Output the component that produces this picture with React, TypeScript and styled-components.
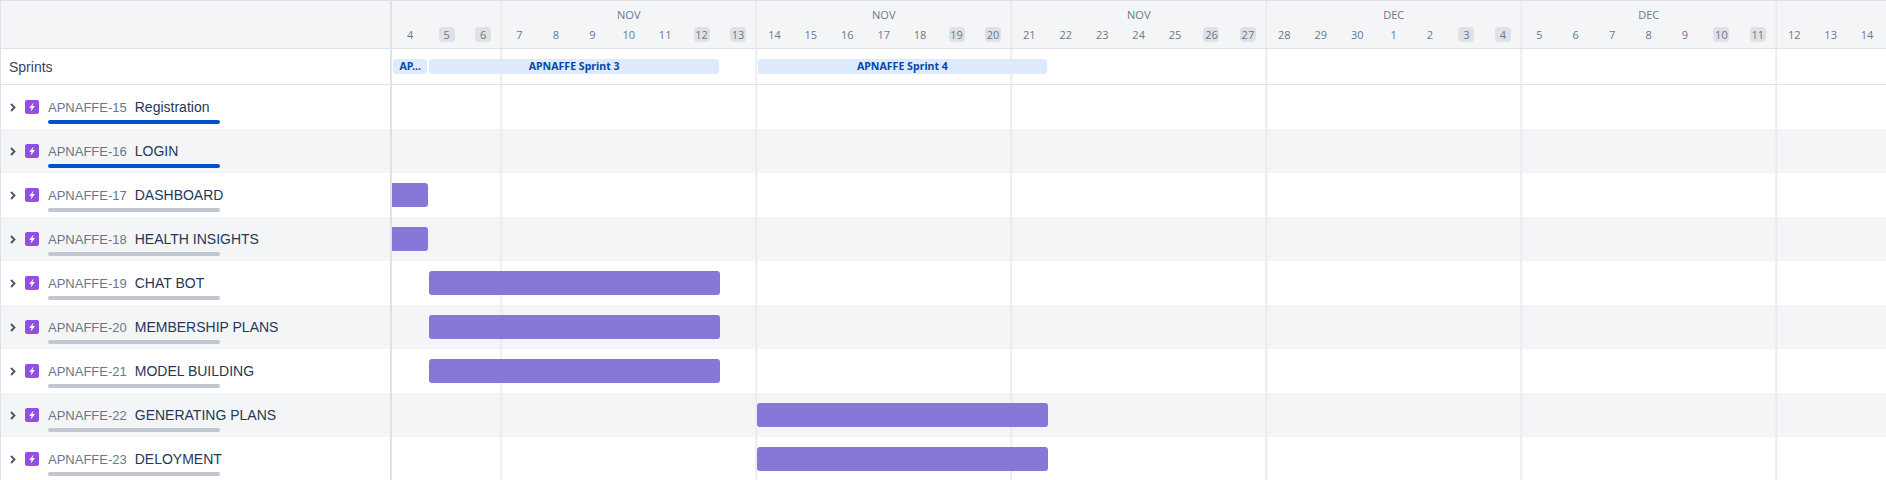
import React from 'react';
import styled, { createGlobalStyle } from 'styled-components';

const WEEK = 255;
const DAY = WEEK / 7;

const DAYS = [
  4, 5, 6, 7, 8, 9, 10, 11, 12, 13, 14, 15, 16, 17, 18, 19, 20, 21, 22, 23, 24, 25, 26, 27, 28, 29, 30, 1, 2, 3, 4, 5,
  6, 7, 8, 9, 10, 11, 12, 13, 14,
];

const MONTHS = [
  { label: '', days: 3 },
  { label: 'NOV', days: 7 },
  { label: 'NOV', days: 7 },
  { label: 'NOV', days: 7 },
  { label: 'DEC', days: 7 },
  { label: 'DEC', days: 7 },
  { label: '', days: 3 },
];

const ISSUES = [
  { key: 'APNAFFE-15', title: 'Registration', active: true },
  { key: 'APNAFFE-16', title: 'LOGIN', active: true },
  { key: 'APNAFFE-17', title: 'DASHBOARD', bar: [1, 1] },
  { key: 'APNAFFE-18', title: 'HEALTH INSIGHTS', bar: [1, 1] },
  { key: 'APNAFFE-19', title: 'CHAT BOT', bar: [2, 8] },
  { key: 'APNAFFE-20', title: 'MEMBERSHIP PLANS', bar: [2, 8] },
  { key: 'APNAFFE-21', title: 'MODEL BUILDING', bar: [2, 8] },
  { key: 'APNAFFE-22', title: 'GENERATING PLANS', bar: [11, 8] },
  { key: 'APNAFFE-23', title: 'DELOYMENT', bar: [11, 8] },
];

const GlobalStyle = createGlobalStyle`
  html, body {
    margin: 0;
    background: #fff;
    overflow: hidden;
  }
  body {
    font-family: "Liberation Sans", Arial, sans-serif;
    color: #172b4d;
  }
  * {
    box-sizing: border-box;
  }
`;

const Page = styled.div`
  width: 1886px;
  height: 480px;
  overflow: hidden;
`;

const Row = styled.div`
  display: grid;
  grid-template-columns: 392px 1fr;
`;

const HeaderRow = styled(Row)`
  height: 49px;
  border-top: 1px solid #dfe1e6;
  border-bottom: 1px solid #dfe1e6;
  background: #f4f5f7;
`;

const SprintRow = styled(Row)`
  height: 36px;
  border-bottom: 1px solid #dfe1e6;
`;

const IssueRow = styled(Row)<{ $shaded: boolean }>`
  height: 44px;
  background: ${({ $shaded }) => ($shaded ? '#f4f5f7' : '#fff')};
`;

const Side = styled.div`
  border-left: 1px solid #dfe1e6;
  border-right: 2px solid #dfe1e6;
  display: flex;
  align-items: center;
  min-width: 0;
`;

const SprintsLabel = styled.span`
  padding-left: 8px;
  font-size: 14px;
  color: #344563;
`;

const Timeline = styled.div`
  display: grid;
  grid-template-columns: repeat(41, ${DAY}px);
  align-items: center;
  background-image: linear-gradient(to right, #ebecf0 2px, transparent 2px);
  background-size: ${WEEK}px 100%;
  background-position: ${DAY * 3 - 1}px 0;
`;

const HeaderTimeline = styled(Timeline)`
  display: flex;
  flex-direction: column;
  align-items: stretch;
`;

const Months = styled.div`
  display: flex;
  height: 26px;
`;

const MonthCell = styled.div<{ $days: number }>`
  flex: none;
  width: ${({ $days }) => $days * DAY}px;
  padding-top: 6px;
  text-align: center;
  font-family: "Open Sans", sans-serif;
  font-size: 11px;
  line-height: 16px;
  color: #6b778c;
`;

const DayGrid = styled.div`
  display: grid;
  grid-template-columns: repeat(41, ${DAY}px);
`;

const Day = styled.span<{ $weekend: boolean }>`
  justify-self: center;
  width: 16px;
  height: 15px;
  border-radius: 4px;
  background: ${({ $weekend }) => ($weekend ? '#dfe1e6' : 'transparent')};
  text-align: center;
  font-family: "Open Sans", sans-serif;
  font-size: 11px;
  line-height: 15px;
  color: #6b778c;
`;

const SprintBar = styled.div<{ $start: number; $span: number; $left: number }>`
  grid-row: 1;
  grid-column: ${({ $start, $span }) => `${$start} / span ${$span}`};
  height: 15px;
  margin: 0 1px 0 ${({ $left }) => $left}px;
  border-radius: 3px;
  background: #deebff;
  overflow: hidden;
  text-align: center;
  font-family: "Noto Sans", sans-serif;
  font-size: 10.6px;
  font-weight: 700;
  line-height: 15px;
  color: #0747a6;
`;

const IssueCell = styled(Side)`
  padding-left: 9px;
`;

const Chevron = styled.svg`
  flex: none;
  width: 6px;
  height: 9px;
`;

const TypeIcon = styled.svg`
  flex: none;
  width: 14px;
  height: 14px;
  margin-left: 9px;
`;

const IssueText = styled.div`
  display: flex;
  flex-direction: column;
  width: 172px;
  height: 44px;
  margin-left: 9px;
  padding-top: 13px;
  white-space: nowrap;
`;

const IssueLine = styled.div`
  display: flex;
  height: 18px;
  line-height: 18px;
`;

const IssueKey = styled.span`
  padding-top: 1px;
  font-size: 13px;
  color: #6b778c;
`;

const IssueTitle = styled.span`
  margin-left: 8px;
  font-size: 14px;
  color: #253858;
`;

const Progress = styled.div<{ $active: boolean }>`
  flex: none;
  height: 4px;
  margin-top: 4px;
  border-radius: 2px;
  background: ${({ $active }) => ($active ? '#0052cc' : '#c1c7d0')};
`;

const Bar = styled.div<{ $start: number; $span: number }>`
  grid-row: 1;
  grid-column: ${({ $start, $span }) => `${$start} / span ${$span}`};
  height: 24px;
  margin-left: ${({ $start }) => ($start > 1 ? '0.6px' : '0')};
  border-radius: ${({ $start }) => ($start > 1 ? '3px' : '0 3px 3px 0')};
  background: #8777d9;
`;

export default function App() {
  return (
    <Page>
      <GlobalStyle />
      <HeaderRow>
        <Side />
        <HeaderTimeline>
          <Months>
            {MONTHS.map((month, i) => (
              <MonthCell key={i} $days={month.days}>
                {month.label}
              </MonthCell>
            ))}
          </Months>
          <DayGrid>
            {DAYS.map((day, i) => (
              <Day key={i} $weekend={i % 7 === 1 || i % 7 === 2}>
                {day}
              </Day>
            ))}
          </DayGrid>
        </HeaderTimeline>
      </HeaderRow>
      <SprintRow>
        <Side>
          <SprintsLabel>Sprints</SprintsLabel>
        </Side>
        <Timeline>
          <SprintBar $start={1} $span={1} $left={1}>AP...</SprintBar>
          <SprintBar $start={2} $span={8} $left={1}>APNAFFE Sprint 3</SprintBar>
          <SprintBar $start={11} $span={8} $left={2}>APNAFFE Sprint 4</SprintBar>
        </Timeline>
      </SprintRow>
      {ISSUES.map((issue, i) => (
        <IssueRow key={issue.key} $shaded={i % 2 === 1}>
          <IssueCell>
            <Chevron viewBox="0 0 6 9">
              <path d="M1 1l3.5 3.5L1 8" fill="none" stroke="#42526e" strokeWidth="1.8" />
            </Chevron>
            <TypeIcon viewBox="0 0 14 14">
              <rect width="14" height="14" rx="2" fill="#904ee2" />
              <path d="M8.6 2.4L4.2 7.9h2.4l-1 3.8 4.4-5.6H7.5z" fill="#fff" />
            </TypeIcon>
            <IssueText>
              <IssueLine>
                <IssueKey>{issue.key}</IssueKey>
                <IssueTitle>{issue.title}</IssueTitle>
              </IssueLine>
              <Progress $active={Boolean(issue.active)} />
            </IssueText>
          </IssueCell>
          <Timeline>
            {issue.bar && <Bar $start={issue.bar[0]} $span={issue.bar[1]} />}
          </Timeline>
        </IssueRow>
      ))}
    </Page>
  );
}
